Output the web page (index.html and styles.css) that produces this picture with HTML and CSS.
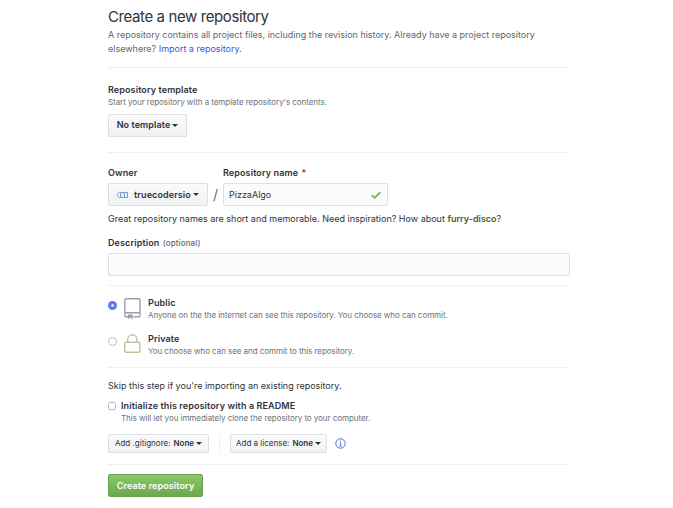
FILE: index.html
```
<!DOCTYPE html>
<html lang="en">
<head>
    <meta charset="UTF-8">
    <meta name="viewport" content="width=device-width, initial-scale=1.0">
    <title>Create a new repository</title>
    <link rel="stylesheet" href="styles.css">
</head>
<body>
    <form class="new-repo">
        <!-- Heading -->
        <header class="subhead">
            <h1>Create a new repository</h1>
            <p><span class="intro-line">A repository contains all project files, including the revision history. Already have a project repository</span> <span class="intro-line">elsewhere? <a href="#">Import a repository.</a></span></p>
        </header>

        <!-- Template -->
        <section class="template">
            <h2 class="label">Repository template</h2>
            <p class="note">Start your repository with a template repository's contents.</p>
            <button type="button" class="btn btn-template">No template <span class="caret"></span></button>
        </section>

        <!-- Owner and name -->
        <section class="details">
            <div class="name-row">
                <div class="owner">
                    <span class="label">Owner</span>
                    <button type="button" class="btn btn-owner">
                        <svg class="avatar" width="11" height="6" viewBox="0 0 11 6" fill="none">
                            <path d="M3 .5H2L.5 1.500v3L2 5.500h1" stroke="#a5abb3"/>
                            <path d="M3.500.5h4v5h-4z" fill="#e4edf8" stroke="#6d9bd0"/>
                            <path d="M8 .5h2.500v5H8" stroke="#7398c5"/>
                        </svg>
                        truecodersio <span class="caret"></span>
                    </button>
                </div>
                <span class="slash">/</span>
                <div class="repo">
                    <label class="label" for="repoName">Repository name <span class="required">*</span></label>
                    <div class="name-field">
                        <input type="text" id="repoName" value="PizzaAlgo">
                        <svg class="check" width="10" height="8" viewBox="0 0 10 8">
                            <path d="M.7 4.200 3.700 6.700 9.300 1.200" fill="none" stroke="#7fbb55" stroke-width="2"/>
                        </svg>
                    </div>
                </div>
            </div>
            <p class="hint">Great repository names are short and memorable. Need inspiration? How about <strong>furry-disco</strong>?</p>
            <label class="label desc-label" for="description">Description <span class="optional">(optional)</span></label>
            <input type="text" id="description">
        </section>

        <!-- Visibility -->
        <section class="visibility">
            <label class="choice">
                <input type="radio" name="visibility" checked>
                <svg class="choice-icon" width="17" height="22" viewBox="0 0 17 22" fill="none" stroke="#9a9fa8" stroke-width="1.400">
                    <path d="M4 18.800H2A1.200 1.200 0 0 1 .8 17.600V2A1.200 1.200 0 0 1 2 .8h12.800A1.200 1.200 0 0 1 16 2v15.600a1.200 1.200 0 0 1-1.200 1.200H9.500M1 14.800h15"/>
                    <path d="M3.800 16.500h5v4.700l-2.500-1.600-2.500 1.600z" fill="#9a9fa8" stroke="none"/>
                </svg>
                <span class="choice-text">
                    <span class="label">Public</span>
                    <span class="note">Anyone on the the internet can see this repository. You choose who can commit.</span>
                </span>
            </label>
            <label class="choice">
                <input type="radio" name="visibility">
                <svg class="choice-icon" width="17" height="22" viewBox="0 0 17 22" fill="none" stroke="#c6bf9c" stroke-width="1.400">
                    <rect x=".8" y="8.300" width="15" height="10" rx="1.300"/>
                    <path d="M3.700 8.300V5.400a4.600 4.600 0 0 1 9.200 0v2.900"/>
                </svg>
                <span class="choice-text">
                    <span class="label">Private</span>
                    <span class="note">You choose who can see and commit to this repository.</span>
                </span>
            </label>
        </section>

        <!-- Initial files -->
        <section class="init">
            <p class="skip">Skip this step if you're importing an existing repository.</p>
            <label class="readme">
                <input type="checkbox">
                <span class="choice-text">
                    <span class="label">Initialize this repository with a README</span>
                    <span class="note">This will let you immediately clone the repository to your computer.</span>
                </span>
            </label>
            <div class="extras">
                <button type="button" class="btn btn-sm btn-ignore"><i>Add .gitignore:</i> None <span class="caret"></span></button>
                <span class="divider"></span>
                <button type="button" class="btn btn-sm btn-license"><i>Add a license:</i> None <span class="caret"></span></button>
                <svg class="info" width="11" height="11" viewBox="0 0 11 11">
                    <circle cx="5.500" cy="5.500" r="4.700" fill="none" stroke="#5068dc"/>
                    <path d="M4.500 4.900h1.200v3M4.300 8h2.600" fill="none" stroke="#5068dc" stroke-width=".9"/>
                    <circle cx="5.400" cy="3.100" r=".7" fill="#5068dc"/>
                </svg>
            </div>
        </section>

        <button type="submit" class="btn-primary">Create repository</button>
    </form>
</body>
</html>
```

FILE: styles.css
```
* {
    box-sizing: border-box;
}

body {
    margin: 0;
    background: #fff;
    color: #2f3339;
    font-family: Inter, "Liberation Sans", sans-serif;
    font-size: 9px;
    line-height: 14px;
}

h1, h2, p {
    margin: 0;
}

a {
    color: #4054d8;
    text-decoration: none;
}

button, input {
    font: inherit;
    color: inherit;
    letter-spacing: inherit;
}

.new-repo {
    width: 462px;
    margin-left: 108px;
    padding-top: 6px;
    white-space: nowrap;
}

section, .subhead {
    border-bottom: 1px solid #eeeff1;
}

.subhead {
    height: 62px;
    color: #62676f;
    letter-spacing: -0.01px;
}

.subhead h1 {
    height: 22px;
    color: #2f3339;
    font-size: 15px;
    font-weight: 400;
    letter-spacing: -0.4px;
    line-height: 22px;
}

.intro-line {
    display: block;
}

.label {
    display: block;
    font-size: 9px;
    font-weight: 600;
    letter-spacing: 0.11px;
    line-height: 12px;
}

.note {
    display: block;
    color: #6d727a;
    font-size: 8px;
    letter-spacing: -0.055px;
    line-height: 12px;
}

/* Buttons */
.btn {
    display: flex;
    align-items: center;
    justify-content: center;
    height: 23px;
    padding: 0 0 1px;
    border: 1px solid #dcdee1;
    border-radius: 2px;
    background: linear-gradient(#fafbfc, #eff1f4);
    font-weight: 600;
    letter-spacing: 0.1px;
    line-height: 14px;
}

.btn-sm {
    height: 19px;
    font-size: 8px;
    letter-spacing: 0;
}

.btn-sm i {
    margin-right: 3px;
    font-style: normal;
    font-weight: 400;
}

.caret {
    margin-left: 2px;
    border: 3px solid transparent;
    border-top-color: #2f3339;
    border-bottom: 0;
}

/* Template */
.template {
    height: 85px;
    padding-top: 16px;
}

.btn-template {
    width: 79px;
    margin-top: 6px;
}

/* Owner, name, description */
.details {
    height: 133px;
    padding-top: 14px;
}

.name-row {
    display: flex;
    align-items: flex-end;
}

.btn-owner {
    width: 100px;
    margin-top: 4px;
    padding-bottom: 0;
}

.avatar {
    margin-right: 6px;
}

.slash {
    width: 15px;
    color: #62676f;
    font-size: 14px;
    line-height: 23px;
    text-align: center;
}

.required {
    margin-left: 1px;
    color: #cb2431;
}

.name-field {
    display: flex;
    align-items: center;
    width: 165px;
    height: 23px;
    margin-top: 4px;
    padding: 0 6px 0 5px;
    border: 1px solid #dcdee1;
    border-radius: 2px;
    background: #fafbfc;
}

.name-field input {
    flex: 1;
    min-width: 0;
    padding: 0;
    border: 0;
    outline: 0;
    background: none;
}

.hint {
    margin-top: 6px;
}

.hint strong {
    color: #3f6428;
    font-weight: 600;
}

.desc-label {
    margin-top: 11px;
}

.optional {
    margin-left: 1px;
    color: #62676f;
    font-size: 8px;
    font-weight: 500;
}

#description {
    display: block;
    width: 100%;
    height: 23px;
    margin-top: 4px;
    border: 1px solid #dcdee1;
    border-radius: 2px;
    background: #fafbfc;
}

/* Visibility */
.visibility {
    height: 82px;
    padding-top: 11px;
}

.choice {
    display: flex;
    height: 36px;
}

.choice input {
    appearance: none;
    width: 9px;
    height: 9px;
    margin: 4px 7px 0 0;
    border: 1px solid #b9bbbe;
    border-radius: 50%;
    background: #fff;
}

.choice input:checked {
    border: 0;
    background: radial-gradient(circle, #fff 0.7px, #6377ee 1.7px);
}

.choice-icon {
    margin: 1px 7px 0 0;
}

/* Initial files */
.init {
    height: 97px;
    padding-top: 11px;
}

.readme {
    display: flex;
    margin-top: 7px;
}

.readme input {
    appearance: none;
    width: 8px;
    height: 8px;
    margin: 2px 5px 0 0;
    border: 1px solid #b9bbbe;
    border-radius: 2px;
}

.extras {
    display: flex;
    align-items: center;
    margin-top: 10px;
}

.btn-ignore {
    width: 101px;
}

.divider {
    width: 1px;
    height: 19px;
    margin: 0 10px;
    background: #eeeff1;
}

.btn-license {
    width: 97px;
    margin-right: 8px;
}

.btn-primary {
    display: block;
    width: 95px;
    height: 23px;
    margin-top: 9px;
    padding: 0;
    border: 1px solid #6aa451;
    border-radius: 2px;
    background: linear-gradient(#86c96a, #6ba84f);
    color: #fff;
    font-weight: 600;
    letter-spacing: 0.1px;
    line-height: 14px;
}
```
